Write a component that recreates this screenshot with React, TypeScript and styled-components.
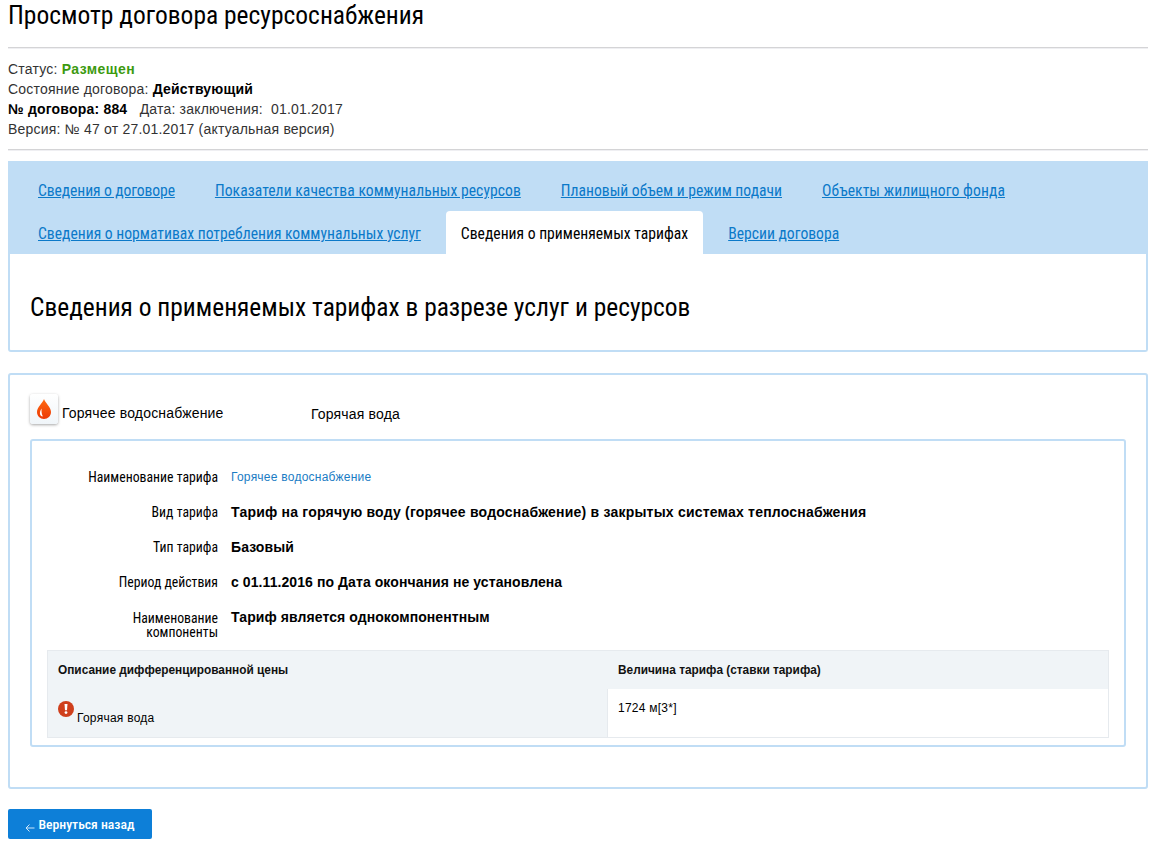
import React from 'react';
import styled, { createGlobalStyle } from 'styled-components';

const condensed = `"Roboto", "Liberation Sans", sans-serif`;

const GlobalStyle = createGlobalStyle`
  html, body {
    margin: 0;
    padding: 0;
    background: #fff;
  }
  body {
    font-family: "Liberation Sans", Arial, sans-serif;
    color: #000;
  }
`;

const Page = styled.div`
  width: 1140px;
  margin-left: 8px;
  padding-bottom: 10px;
`;

const Title = styled.h1`
  margin: 0;
  height: 47px;
  font-family: ${condensed};
  font-stretch: condensed;
  font-weight: 400;
  font-size: 25.5px;
  line-height: 31px;
  color: #000;
`;

const Divider = styled.div`
  height: 1px;
  background: #d4d4d6;
  border-bottom: 1px solid #efeff2;
`;

const Meta = styled.div`
  padding: 10px 0;
  height: 80px;
  font-size: 14px;
  line-height: 20px;
  letter-spacing: 0.2px;
  color: #333;
`;

const MetaLine = styled.div`
  white-space: pre;
`;

const Strong = styled.b<{ $green?: boolean }>`
  color: ${(p) => (p.$green ? '#3c9a0f' : '#000')};
  letter-spacing: ${(p) => (p.$green ? '0.45px' : '0.2px')};
`;

const Tabs = styled.div`
  margin-top: 10px;
  background: #c0ddf5;
  height: 93px;
  padding: 7px 0 0 15px;
  box-sizing: border-box;
  display: flex;
  flex-direction: column;
`;

const TabRow = styled.div`
  display: flex;
  height: 43px;
`;

const Tab = styled.a<{ $active?: boolean; $spacing?: number }>`
  display: block;
  padding: 2px 15px 0;
  margin-right: 10px;
  font-family: ${condensed};
  font-stretch: condensed;
  font-size: 15.65px;
  line-height: 41px;
  letter-spacing: ${(p) => p.$spacing ?? 0}px;
  color: ${(p) => (p.$active ? '#000' : '#0b79c9')};
  text-decoration: ${(p) => (p.$active ? 'none' : 'underline')};
  background: ${(p) => (p.$active ? '#fff' : 'transparent')};
  border-radius: 4px 4px 0 0;
  white-space: nowrap;
`;

const TabBody = styled.div`
  border: 2px solid #c0ddf5;
  border-top: 0;
  border-radius: 0 0 3px 3px;
  height: 98px;
  padding: 10px 0 0 20px;
  box-sizing: border-box;
  display: flex;
  align-items: center;
`;

const SectionTitle = styled.h2`
  margin: 0;
  font-family: ${condensed};
  font-stretch: condensed;
  font-weight: 400;
  font-size: 25.45px;
  line-height: 30px;
`;

const Card = styled.div`
  margin-top: 21px;
  border: 2px solid #c0ddf5;
  border-radius: 3px;
  height: 416px;
  box-sizing: border-box;
  padding: 18px 20px 0;
`;

const ServiceRow = styled.div`
  display: flex;
  align-items: flex-start;
  height: 46px;
  font-size: 14px;
  line-height: 16px;
  letter-spacing: 0.17px;
`;

const IconTile = styled.div`
  width: 28px;
  height: 30px;
  margin: 1px 4px 0 0;
  border-radius: 3px;
  background: linear-gradient(#fff, #f0f5f9);
  box-shadow: 0 1px 3px rgba(0, 0, 0, 0.35);
  display: flex;
  align-items: center;
  justify-content: center;
`;

const ServiceName = styled.span`
  width: 249px;
  margin-top: 12px;
`;

const ResourceName = styled.span`
  margin-top: 13px;
`;

const Inner = styled.div`
  border: 2px solid #c0ddf5;
  border-radius: 3px;
  height: 308px;
  box-sizing: border-box;
  padding: 18px 15px 0;
`;

const Field = styled.div<{ $tall?: boolean }>`
  display: flex;
  gap: 13px;
  height: 35px;
  box-sizing: border-box;
  padding-top: ${(p) => (p.$tall ? '10px' : '0')};
  align-items: ${(p) => (p.$tall ? 'flex-start' : 'center')};
`;

const Label = styled.div<{ $tall?: boolean }>`
  width: 171px;
  margin-top: ${(p) => (p.$tall ? '2px' : '0')};
  text-align: right;
  font-family: ${condensed};
  font-stretch: condensed;
  font-size: 13.75px;
  line-height: 14px;
  color: #000;
`;

const Value = styled.div<{ $wide?: boolean }>`
  font-size: 14px;
  font-weight: 700;
  line-height: 16px;
  letter-spacing: ${(p) => (p.$wide ? '0.21px' : '0.08px')};
`;

const LinkValue = styled.a`
  font-size: 12px;
  letter-spacing: 0.24px;
  color: #1a7cc4;
  text-decoration: none;
`;

const Table = styled.div`
  margin-top: 16px;
  display: grid;
  grid-template-columns: 559px 1fr;
  grid-template-rows: 38px 48px;
  border: 1px solid #e6eaee;
  background: #f0f4f7;
  font-size: 12px;
`;

const HeadCell = styled.div`
  padding: 0 10px;
  font-size: 11.85px;
  font-weight: 700;
  line-height: 38px;
  color: #111;

  & + & {
    padding-left: 11px;
  }
`;

const NameCell = styled.div`
  padding: 12px 10px 0;
  display: flex;
  align-items: flex-start;
  gap: 3px;
`;

const NameText = styled.span`
  margin-top: 10px;
  letter-spacing: 0.25px;
`;

const ValueCell = styled.div`
  background: #fff;
  padding: 12px 10px;
  border-left: 1px solid #e6eaee;
  letter-spacing: 0.25px;
`;

const BackButton = styled.a`
  margin-top: 20px;
  width: 144px;
  height: 30px;
  background: #0d7fd8;
  border-radius: 2px;
  color: #fff;
  display: flex;
  align-items: center;
  justify-content: center;
  gap: 3px;
  font-family: ${condensed};
  font-stretch: condensed;
  font-weight: 500;
  font-size: 13.7px;
`;

const BackArrow = styled.svg`
  margin-top: 6px;
`;

const tabsRow1 = [
  { title: 'Сведения о договоре', spacing: -0.1 },
  { title: 'Показатели качества коммунальных ресурсов', spacing: 0.05 },
  { title: 'Плановый объем и режим подачи', spacing: 0 },
  { title: 'Объекты жилищного фонда', spacing: 0.08 },
];

const App = () => (
  <>
    <GlobalStyle />
    <Page>
      <Title>Просмотр договора ресурсоснабжения</Title>
      <Divider />
      <Meta>
        <MetaLine>
          Статус: <Strong $green>Размещен</Strong>
        </MetaLine>
        <MetaLine>
          Состояние договора: <Strong>Действующий</Strong>
        </MetaLine>
        <MetaLine>
          <Strong>№ договора: 884</Strong>{'   '}Дата: заключения:{'  '}01.01.2017
        </MetaLine>
        <MetaLine>Версия: № 47 от 27.01.2017 (актуальная версия)</MetaLine>
      </Meta>
      <Divider />

      <Tabs>
        <TabRow>
          {tabsRow1.map((t) => (
            <Tab key={t.title} $spacing={t.spacing}>
              {t.title}
            </Tab>
          ))}
        </TabRow>
        <TabRow>
          <Tab>Сведения о нормативах потребления коммунальных услуг</Tab>
          <Tab $active>Сведения о применяемых тарифах</Tab>
          <Tab>Версии договора</Tab>
        </TabRow>
      </Tabs>
      <TabBody>
        <SectionTitle>Сведения о применяемых тарифах в разрезе услуг и ресурсов</SectionTitle>
      </TabBody>

      <Card>
        <ServiceRow>
          <IconTile>
            <svg width="14" height="20" viewBox="0 0 14 20">
              <defs>
                <linearGradient id="drop" x1="0" y1="0" x2="0" y2="1">
                  <stop offset="0" stopColor="#ff6a10" />
                  <stop offset="1" stopColor="#ec3a06" />
                </linearGradient>
              </defs>
              <path d="M7 0C5.8 4 0 8 0 13C0 16.9 3.1 20 7 20C10.9 20 14 16.9 14 13C14 8 8.2 4 7 0Z" fill="url(#drop)" />
              <path d="M4.6 9.5C3.2 11.5 2.4 13.8 3.2 15.8C3.8 17 5 17.6 5.8 17.3C4.6 15 4.4 12.4 4.6 9.5Z" fill="#fff" />
            </svg>
          </IconTile>
          <ServiceName>Горячее водоснабжение</ServiceName>
          <ResourceName>Горячая вода</ResourceName>
        </ServiceRow>
        <Inner>
          <Field>
            <Label>Наименование тарифа</Label>
            <LinkValue>Горячее водоснабжение</LinkValue>
          </Field>
          <Field>
            <Label>Вид тарифа</Label>
            <Value $wide>Тариф на горячую воду (горячее водоснабжение) в закрытых системах теплоснабжения</Value>
          </Field>
          <Field>
            <Label>Тип тарифа</Label>
            <Value>Базовый</Value>
          </Field>
          <Field>
            <Label>Период действия</Label>
            <Value>с 01.11.2016 по Дата окончания не установлена</Value>
          </Field>
          <Field $tall>
            <Label $tall>
              Наименование
              <br />
              компоненты
            </Label>
            <Value>Тариф является однокомпонентным</Value>
          </Field>
          <Table>
            <HeadCell>Описание дифференцированной цены</HeadCell>
            <HeadCell>Величина тарифа (ставки тарифа)</HeadCell>
            <NameCell>
              <svg width="16" height="16" viewBox="0 0 16 16">
                <circle cx="8" cy="8" r="8" fill="#cf3f1c" />
                <path d="M6.5 3h3l-.5 6.2H7z" fill="#fff" />
                <circle cx="8" cy="11.6" r="1.4" fill="#fff" />
              </svg>
              <NameText>Горячая вода</NameText>
            </NameCell>
            <ValueCell>1724 м[3*]</ValueCell>
          </Table>
        </Inner>
      </Card>

      <BackButton>
        <BackArrow width="10" height="9" viewBox="0 0 10 9">
          <path d="M9.5 5H1M1 5l3.5-3.5M1 5l3.5 3.5" stroke="#cfe6f8" strokeWidth="1" fill="none" />
        </BackArrow>
        Вернуться назад
      </BackButton>
    </Page>
  </>
);

export default App;
